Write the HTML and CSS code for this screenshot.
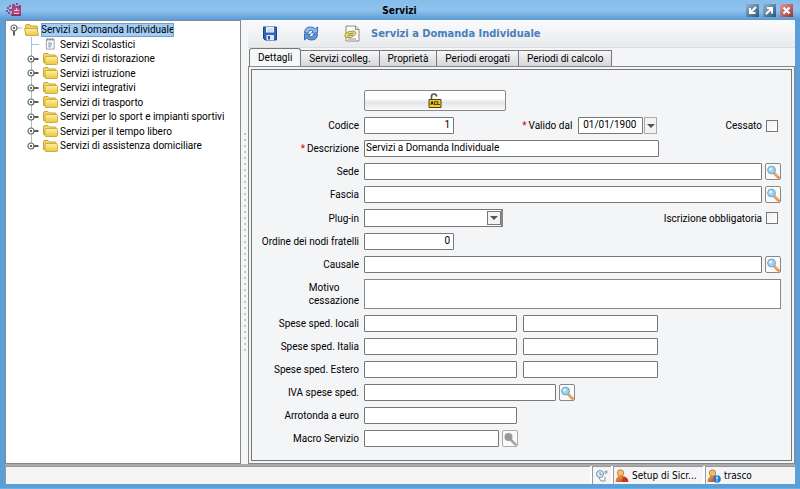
FILE: index.html
```html
<!DOCTYPE html>
<html lang="it">
<head>
  <meta charset="UTF-8" />
  <meta name="viewport" content="width=device-width, initial-scale=1.0"/>
  <title>Servizi</title>
  <link rel="stylesheet" href="styles.css">
</head>
<body>

  <!-- shared icons -->
  <svg class="defs" aria-hidden="true">
    <defs>
      <linearGradient id="gold" x1="0" y1="0" x2="0" y2="1">
        <stop offset="0" stop-color="#fdf0a0"/>
        <stop offset="1" stop-color="#ecc63c"/>
      </linearGradient>
      <linearGradient id="shirt" x1="0" y1="0" x2="1" y2="1">
        <stop offset="0" stop-color="#f5b04a"/>
        <stop offset="1" stop-color="#b8330f"/>
      </linearGradient>
    </defs>
    <symbol id="folder" viewBox="0 0 15 12">
      <path d="M.5 9.500V2Q.5 .5 2 .5H5L6.500 2H12Q13 2 13 3V9.500Z" fill="#f3d765" stroke="#c9a63a"/>
      <path d="M2 4Q2 3.500 3 3.500H13.500Q14.500 3.500 14.500 4.500V10.500Q14.500 11.500 13.500 11.500H3Q2 11.500 2 10.500Z" fill="url(#gold)" stroke="#c29f35" stroke-width=".8"/>
    </symbol>
    <symbol id="folder-open" viewBox="0 0 15 12">
      <path d="M1.500 10.500V2Q1.500 .5 2.500 .5H5.500L7 2H12Q13.500 2 13.500 3V10.500Z" fill="#f0d05a" stroke="#c9a63a"/>
      <path d="M.5 4.500H13L14.600 11.500H2Z" fill="url(#gold)" stroke="#c29f35" stroke-width=".8"/>
    </symbol>
    <symbol id="handle" viewBox="0 0 12 10">
      <path d="M7 5H11.500" stroke="#333" stroke-width="1.600"/>
      <circle cx="4" cy="5" r="3" fill="#fff" stroke="#666" stroke-width="1.200"/>
      <circle cx="4" cy="5" r="1" fill="#333"/>
    </symbol>
    <symbol id="lens" viewBox="0 0 14 14">
      <path d="M8 8L12.500 12.500" stroke="#e5904a" stroke-width="2.800" stroke-linecap="round"/>
      <path d="M8 7.500L12 11.500" stroke="#fbd3a4" stroke-width=".8"/>
      <circle cx="5.500" cy="5" r="3.900" fill="#9ed2f2" stroke="#6ea3c9"/>
      <circle cx="4.500" cy="4" r="1.500" fill="#e3f4fd"/>
    </symbol>
    <symbol id="lens-off" viewBox="0 0 14 14">
      <path d="M8 8L12.500 12.500" stroke="#a6a6a6" stroke-width="2.600" stroke-linecap="round"/>
      <circle cx="5.500" cy="5" r="4" fill="#999"/>
    </symbol>
  </svg>

  <header class="titlebar">
    <svg class="logo" viewBox="0 0 16 14" aria-hidden="true">
      <path d="M7 4H14V12H7Z" fill="#f4c3d8" stroke="#8c1f58" stroke-width="1.400"/>
      <path d="M6 2H9M10 1H12M1 5H3M3 3H5M0 8H2M3 7H6M2 10H4M8 6H10M11 6H13M8 9H13M5 12H15M13 3H15" stroke="#a02560" stroke-width="1.600"/>
    </svg>
    <h1>Servizi</h1>
    <div class="window-buttons">
      <button type="button" aria-label="Riduci">
        <svg viewBox="0 0 13 13"><path d="M10 3L4 9M4 4V9H9.500" fill="none" stroke="#fff" stroke-width="2"/></svg>
      </button>
      <button type="button" aria-label="Ingrandisci">
        <svg viewBox="0 0 13 13"><path d="M3 10L9 4M4 4H9V9.500" fill="none" stroke="#fff" stroke-width="2"/></svg>
      </button>
      <button type="button" class="close" aria-label="Chiudi">
        <svg viewBox="0 0 13 13"><path d="M3.500 3.500L9.500 9.500M9.500 3.500L3.500 9.500" stroke="#fff" stroke-width="2.200"/></svg>
      </button>
    </div>
  </header>

  <main>
    <nav class="tree">
      <div class="node root">
        <svg class="handle" viewBox="0 0 12 12" aria-hidden="true">
          <path d="M7 4H12" stroke="#8fb8d0"/>
          <path d="M4 7V11.500" stroke="#333" stroke-width="1.600"/>
          <circle cx="4" cy="4" r="3" fill="#fff" stroke="#666" stroke-width="1.200"/>
          <circle cx="4" cy="4" r="1" fill="#333"/>
        </svg>
        <svg class="folder" aria-hidden="true"><use href="#folder-open"/></svg>
        <a href="#" class="selected">Servizi a Domanda Individuale</a>
      </div>
      <ul>
        <li class="node leaf">
          <span class="branch"></span>
          <svg class="folder" viewBox="0 0 15 13" aria-hidden="true">
            <path d="M3 1.500H11.500V12H3Z" fill="#fafafa" stroke="#999"/>
            <path d="M4 0V3M6 0V3M8 0V3M10 0V3" stroke="#777" stroke-width=".8"/>
            <path d="M5 5.500H9M5 7.500H9M5 9.500H8" stroke="#7385a8"/>
          </svg>
          <a href="#">Servizi Scolastici</a>
        </li>
        <li class="node"><svg class="handle"><use href="#handle"/></svg><svg class="folder"><use href="#folder"/></svg><a href="#">Servizi di ristorazione</a></li>
        <li class="node"><svg class="handle"><use href="#handle"/></svg><svg class="folder"><use href="#folder"/></svg><a href="#">Servizi istruzione</a></li>
        <li class="node"><svg class="handle"><use href="#handle"/></svg><svg class="folder"><use href="#folder"/></svg><a href="#">Servizi integrativi</a></li>
        <li class="node"><svg class="handle"><use href="#handle"/></svg><svg class="folder"><use href="#folder"/></svg><a href="#">Servizi di trasporto</a></li>
        <li class="node"><svg class="handle"><use href="#handle"/></svg><svg class="folder"><use href="#folder"/></svg><a href="#">Servizi per lo sport e impianti sportivi</a></li>
        <li class="node"><svg class="handle"><use href="#handle"/></svg><svg class="folder"><use href="#folder"/></svg><a href="#">Servizi per il tempo libero</a></li>
        <li class="node"><svg class="handle"><use href="#handle"/></svg><svg class="folder"><use href="#folder"/></svg><a href="#">Servizi di assistenza domiciliare</a></li>
      </ul>
    </nav>

    <div class="splitter"></div>

    <section class="detail">
      <div class="toolbar">
        <button type="button" aria-label="Salva">
          <svg viewBox="0 0 16 16">
            <path d="M1.500 1.500H14.500V14.500H3L1.500 13Z" fill="#2f66b8" stroke="#1d4688"/>
            <path d="M4 1.500H12V7H4Z" fill="#eef4fc"/>
            <path d="M5 3.500H11M5 5.500H11" stroke="#a9bddb" stroke-width=".8"/>
            <path d="M4.500 9.500H12V14.500H4.500Z" fill="#dfe8f4"/>
            <path d="M6 10.500H8V14H6Z" fill="#24519a"/>
          </svg>
        </button>
        <button type="button" aria-label="Aggiorna">
          <svg viewBox="0 0 16 16">
            <path d="M1.500 7.500Q1.500 1.500 7.500 1.500Q10.500 1.500 12.300 3.300L14.500 1.500V7.500H8.500L10.200 5.500Q6.500 3.500 5 7.500Z" fill="#8fbdea" stroke="#2a61ad" stroke-width=".9"/>
            <path d="M14.500 8.500Q14.500 14.500 8.500 14.500Q5.500 14.500 3.700 12.700L1.500 14.500V8.500H7.500L5.800 10.500Q9.500 12.500 11 8.500Z" fill="#5b98d9" stroke="#2a61ad" stroke-width=".9"/>
          </svg>
        </button>
        <button type="button" aria-label="Documento">
          <svg viewBox="0 0 16 16">
            <path d="M2 .5H11.500L15 4V15.500H2Z" fill="#fafafa" stroke="#8b8b8b"/>
            <path d="M11.500 .5V4H15" fill="#ddd" stroke="#8b8b8b"/>
            <path d="M.8 10.500Q1 7 5 6L10 5.500Q13 6.500 11.500 9L7 12H2Z" fill="#f0df62" stroke="#96852c" stroke-width=".8"/>
            <path d="M4 8.500L9.500 7.500M3.500 10.300L9 9.300M4 13.500H12" stroke="#777" stroke-width=".8"/>
          </svg>
        </button>
        <h2>Servizi a Domanda Individuale</h2>
      </div>

      <div class="tabs" role="tablist">
        <button type="button" role="tab" class="active" aria-selected="true">Dettagli</button>
        <button type="button" role="tab">Servizi colleg.</button>
        <button type="button" role="tab">Proprietà</button>
        <button type="button" role="tab">Periodi erogati</button>
        <button type="button" role="tab">Periodi di calcolo</button>
      </div>

      <div class="panel">
        <form>
          <div class="row acl-row">
            <span class="name"></span>
            <button type="button" class="acl">
              <svg viewBox="0 0 14 16" aria-hidden="true">
                <path d="M3.500 7V3.500Q3.500 1 6 1Q8.500 1 8.500 3.500" fill="none" stroke="#555" stroke-width="1.600"/>
                <path d="M1 6.500H13V14.500H1Z" fill="#f3ce2e" stroke="#4d3f0c"/>
              </svg>
              <span>ACL</span>
            </button>
          </div>
          <div class="row">
            <label class="name" for="codice">Codice</label>
            <input type="text" id="codice" class="number" value="1">
            <label class="push" for="valido"><b>*</b>Valido dal</label>
            <input type="text" id="valido" class="date" value="01/01/1900">
            <button type="button" class="drop" aria-label="Calendario"></button>
            <label class="push" for="cessato">Cessato</label>
            <input type="checkbox" id="cessato">
          </div>
          <div class="row">
            <label class="name" for="descrizione"><b>*</b>Descrizione</label>
            <input type="text" id="descrizione" class="wide" value="Servizi a Domanda Individuale">
          </div>
          <div class="row">
            <label class="name" for="sede">Sede</label>
            <input type="text" id="sede" class="fill">
            <button type="button" class="search" aria-label="Cerca sede"><svg><use href="#lens"/></svg></button>
          </div>
          <div class="row">
            <label class="name" for="fascia">Fascia</label>
            <input type="text" id="fascia" class="fill">
            <button type="button" class="search" aria-label="Cerca fascia"><svg><use href="#lens"/></svg></button>
          </div>
          <div class="row">
            <label class="name" for="plugin">Plug-in</label>
            <div class="combo"><select id="plugin"><option></option></select><i></i></div>
            <label class="push" for="iscrizione">Iscrizione obbligatoria</label>
            <input type="checkbox" id="iscrizione">
          </div>
          <div class="row">
            <label class="name" for="ordine">Ordine dei nodi fratelli</label>
            <input type="text" id="ordine" class="number" value="0">
          </div>
          <div class="row">
            <label class="name" for="causale">Causale</label>
            <input type="text" id="causale" class="fill">
            <button type="button" class="search" aria-label="Cerca causale"><svg><use href="#lens"/></svg></button>
          </div>
          <div class="row">
            <label class="name" for="motivo"><span class="two-lines">Motivo<br>cessazione</span></label>
            <textarea id="motivo"></textarea>
          </div>
          <div class="row">
            <label class="name" for="locali">Spese sped. locali</label>
            <input type="text" id="locali" class="medium">
            <input type="text" class="small second" aria-label="Spese sped. locali, nota">
          </div>
          <div class="row">
            <label class="name" for="italia">Spese sped. Italia</label>
            <input type="text" id="italia" class="medium">
            <input type="text" class="small second" aria-label="Spese sped. Italia, nota">
          </div>
          <div class="row">
            <label class="name" for="estero">Spese sped. Estero</label>
            <input type="text" id="estero" class="medium">
            <input type="text" class="small second" aria-label="Spese sped. Estero, nota">
          </div>
          <div class="row">
            <label class="name" for="iva">IVA spese sped.</label>
            <input type="text" id="iva" class="large">
            <button type="button" class="search" aria-label="Cerca IVA"><svg><use href="#lens"/></svg></button>
          </div>
          <div class="row">
            <label class="name" for="arrotonda">Arrotonda a euro</label>
            <input type="text" id="arrotonda" class="medium">
          </div>
          <div class="row">
            <label class="name" for="macro">Macro Servizio</label>
            <input type="text" id="macro" class="small">
            <button type="button" class="search" aria-label="Cerca macro servizio" disabled><svg><use href="#lens-off"/></svg></button>
          </div>
        </form>
      </div>
    </section>
  </main>

  <footer class="status">
    <div class="cell message"></div>
    <div class="cell tool">
      <svg viewBox="0 0 14 14" aria-hidden="true">
        <circle cx="5" cy="5" r="3.500" fill="#dcecf5" stroke="#6f94ad"/>
        <path d="M5 3V5.500H7M4 9L6 12H10V8" fill="none" stroke="#8497a5"/>
        <path d="M9 3H13M11 1.500V5" stroke="#8da0ae" stroke-width="1.200"/>
      </svg>
    </div>
    <div class="cell user">
      <svg viewBox="0 0 14 14" aria-hidden="true">
        <path d="M.5 13Q.5 6.500 6 6.500Q13 7 13.500 13Z" fill="url(#shirt)"/>
        <circle cx="5.500" cy="4" r="3.200" fill="#f4bd70" stroke="#b87020" stroke-width=".8"/>
        <path d="M8 8L12 9L13 13H7Z" fill="#c5341a"/>
      </svg>
      Setup di Sicr...
    </div>
    <div class="cell user">
      <svg viewBox="0 0 14 14" aria-hidden="true">
        <path d="M.5 13Q.5 6.500 6 6.500Q11 7 12 13Z" fill="url(#shirt)"/>
        <circle cx="5.500" cy="4" r="3.200" fill="#f4bd70" stroke="#b87020" stroke-width=".8"/>
        <circle cx="10" cy="10" r="3.800" fill="#2379d0"/>
        <path d="M10 7.500V10.500M10 11.500V12.500" stroke="#fff" stroke-width="1.300"/>
      </svg>
      trasco
    </div>
  </footer>

</body>
</html>
```
FILE: styles.css
```css
* {
  box-sizing: border-box;
}

body {
  margin: 0;
  height: 100vh;
  display: flex;
  flex-direction: column;
  padding: 0 5px 4px;
  background: #5b9fd8;
  border-bottom: 1px solid #6fb0e4;
  font-family: Roboto, Tahoma, "Liberation Sans", sans-serif;
  font-size: 10px;
  color: #000;
}

button,
input,
select,
textarea {
  font: inherit;
  color: inherit;
  margin: 0;
  padding: 0;
}

.defs {
  position: absolute;
  width: 0;
  height: 0;
}

/* title bar */
.titlebar {
  display: grid;
  grid-template-columns: 1fr auto 1fr;
  align-items: center;
  height: 20px;
  flex: none;
  margin: 0 -5px;
  padding: 0 7px 0 6px;
  background: linear-gradient(#86bcea, #8fc3ee 50%, #5a9ad6);
}

.titlebar h1 {
  margin: 0;
  font-family: "DejaVu Sans Condensed", Tahoma, sans-serif;
  font-size: 10px;
}

.logo {
  width: 16px;
  height: 14px;
}

.window-buttons {
  display: flex;
  justify-content: flex-end;
  gap: 4px;
}

.window-buttons button {
  display: flex;
  width: 13px;
  height: 13px;
  border: 0;
  background: linear-gradient(135deg, #8fb5d4, #34536e);
}

.window-buttons .close {
  background: linear-gradient(135deg, #dc9a98, #a03430);
}

main {
  display: flex;
  flex: 1;
  min-height: 0;
  background: #f4f5f7;
}

/* tree */
.tree {
  width: 236px;
  flex: none;
  padding: 1px 4px;
  background: #fff;
  border: 1px solid #888;
}

.node {
  display: flex;
  align-items: center;
  white-space: nowrap;
}

.root {
  height: 15px;
}

.tree ul {
  display: grid;
  grid-auto-rows: 1fr;
  height: 116px;
  margin: 0 0 0 21px;
  padding: 0;
  list-style: none;
  background: linear-gradient(#9cc3d8, #9cc3d8) 0 0 / 1px 108px no-repeat;
}

.tree a {
  color: inherit;
  text-decoration: none;
}

.handle {
  width: 12px;
  height: 12px;
  flex: none;
}

li .handle {
  height: 10px;
  margin-left: -4px;
}

.branch {
  width: 8px;
  height: 1px;
  background: #9cc3d8;
}

.folder {
  width: 15px;
  height: 12px;
  margin: 0 2px 0 4px;
  flex: none;
}

.root .folder {
  margin-left: 2px;
}

.tree .selected {
  height: 14px;
  line-height: 14px;
  background: #a3cdf5;
  outline: 1px solid #6ba0d0;
  outline-offset: -1px;
}

.splitter {
  width: 7px;
  flex: none;
  padding: 110px 0;
  background: radial-gradient(circle, #c6c6c6 1px, transparent 1px) center / 4px 6px repeat-y;
  background-clip: content-box;
}

/* toolbar */
.detail {
  flex: 1;
  min-width: 0;
  display: flex;
  flex-direction: column;
}

.toolbar {
  display: flex;
  align-items: center;
  height: 28px;
  padding-left: 14px;
  background: linear-gradient(#fafbfc, #e9eaec);
  border-bottom: 1px solid #dcdde0;
}

.toolbar button {
  display: flex;
  width: 16px;
  height: 17px;
  margin-right: 25px;
  border: 0;
  background: none;
}

.toolbar h2 {
  margin: 0 0 0 -14px;
  font-family: "DejaVu Sans Condensed", Tahoma, sans-serif;
  font-size: 11px;
  color: #4a7ebb;
}

/* tabs */
.tabs {
  display: flex;
  align-items: flex-end;
  height: 18px;
  padding-left: 1px;
}

.tabs button {
  height: 16px;
  padding: 0 8px;
  border: 1px solid #777;
  border-width: 1px 1px 0 0;
  background: linear-gradient(#f6f6f7, #d5d6da);
}

.tabs .active {
  height: 18px;
  border-left-width: 1px;
  border-radius: 3px 3px 0 0;
  background: #f6f7f9;
}

.panel {
  flex: 1;
  padding: 2px;
  border: 1px solid #888;
}

form {
  display: flex;
  flex-direction: column;
  gap: 6px;
  height: 100%;
  padding: 20px 10px 0 0;
  border: 1px solid #777;
}

.row {
  display: flex;
  align-items: center;
}

.name {
  width: 107px;
  margin-right: 5px;
  flex: none;
  text-align: right;
  white-space: nowrap;
}

label b {
  margin-right: 2px;
  font-weight: normal;
  color: #d00;
}

.two-lines {
  display: inline-block;
  line-height: 13px;
  text-align: left;
}

input[type="text"] {
  height: 17px;
  padding: 0 3px 2px 1px;
  border: 1px solid #777;
  border-radius: 1px;
  background: #fff;
}

.number {
  width: 90px;
  text-align: right;
}

input.date {
  width: 65px;
  text-align: center;
}

.wide {
  width: 295px;
}

.large {
  width: 192px;
}

.medium {
  width: 153px;
}

.small {
  width: 135px;
}

.second {
  margin-left: 6px;
}

.fill {
  flex: 1;
  min-width: 0;
}

.push {
  margin-left: auto;
  margin-right: 4px;
}

label + .date {
  margin-left: 2px;
}

textarea {
  flex: 1;
  height: 30px;
  border: 1px solid #888;
  resize: none;
}

input[type="checkbox"] {
  appearance: none;
  width: 12px;
  height: 12px;
  margin-right: 3px;
  border: 1px solid #777;
  background: linear-gradient(135deg, #f0f1f3, #fff);
}

.acl {
  display: grid;
  place-items: center;
  width: 142px;
  height: 21px;
  border: 1px solid #888;
  border-radius: 2px;
  background: linear-gradient(#fff, #fff 40%, #e2e4e8 60%, #fafafa);
}

.acl svg,
.acl span {
  grid-area: 1 / 1;
}

.acl svg {
  width: 14px;
  height: 16px;
}

.acl span {
  padding-top: 5px;
  font-size: 5px;
  font-weight: bold;
}

.search {
  display: grid;
  place-items: center;
  width: 16px;
  height: 17px;
  margin-left: 3px;
  border: 1px solid #888;
  border-radius: 2px;
  background: #fafafa;
}

.search svg {
  width: 14px;
  height: 14px;
}

.search:disabled {
  border-color: #aaa;
}

/* drop-down arrows */
.drop {
  display: grid;
  place-items: center;
  width: 13px;
  height: 17px;
  margin-left: 1px;
  border: 1px solid #aaa;
  background: #f2f3f5;
}

.drop::after,
.combo i::after {
  content: "";
  border: 4px solid transparent;
  border-top-color: #555;
  border-bottom: 0;
}

.combo {
  display: grid;
  width: 139px;
  height: 18px;
}

.combo select,
.combo i {
  grid-area: 1 / 1;
}

.combo select {
  appearance: none;
  border: 1px solid #777;
  border-right: 2px solid #888;
  background: #fff;
}

.combo i {
  display: grid;
  place-items: center;
  justify-self: end;
  align-self: center;
  width: 14px;
  height: 14px;
  margin-right: 2px;
  border: 1px solid #777;
  background: #f2f3f5;
  pointer-events: none;
}

/* status bar */
.status {
  display: flex;
  gap: 2px;
  height: 20px;
  flex: none;
  border-top: 2px solid #aaa;
  background: #fff;
}

.cell {
  display: flex;
  align-items: center;
  gap: 3px;
  border: 1px solid #999;
  border-width: 1px 0 0 1px;
  background: #f4f5f7;
}

.cell svg {
  width: 14px;
  height: 14px;
}

.message {
  flex: 1;
}

.tool {
  width: 19px;
  justify-content: center;
}

.user {
  width: 90px;
  padding-left: 1px;
  font-family: "DejaVu Sans Condensed", Tahoma, sans-serif;
}
```
